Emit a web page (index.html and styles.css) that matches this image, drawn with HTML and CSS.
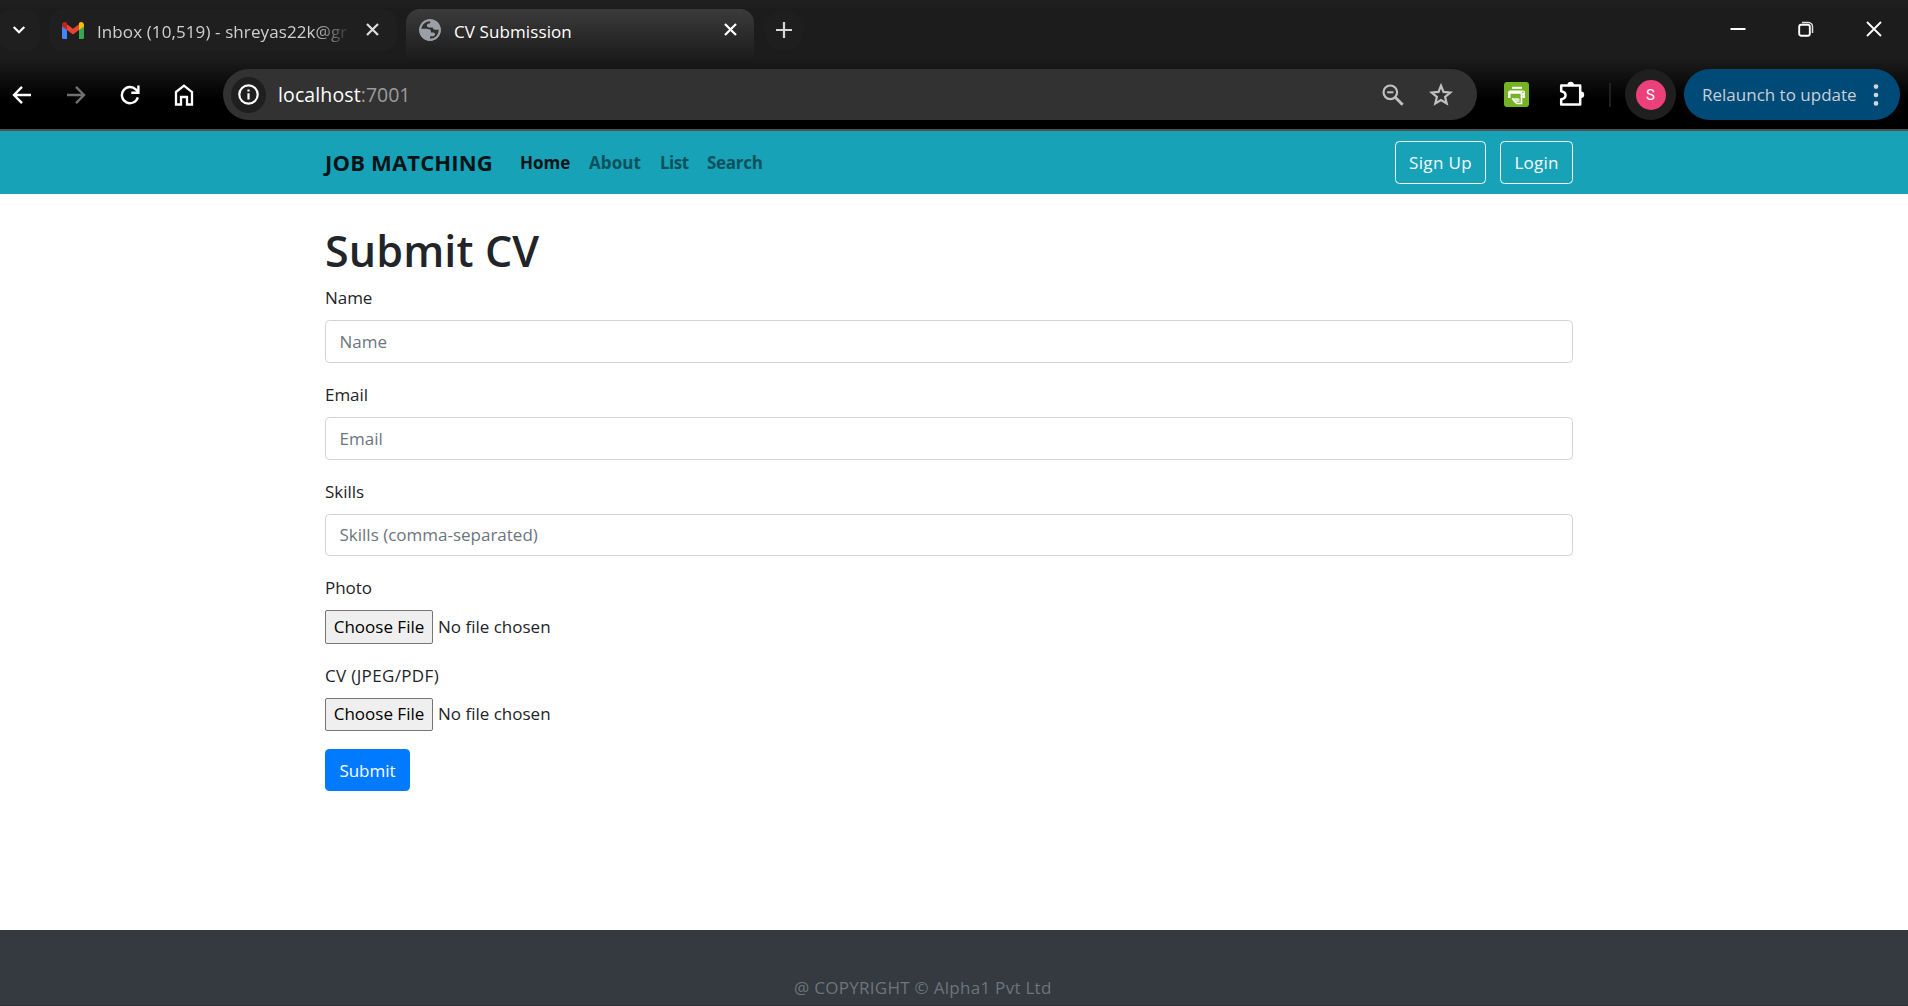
FILE: index.html
```html
<!DOCTYPE html>
<html lang="en">
<head>
<meta charset="utf-8">
<title>CV Submission</title>
<link rel="stylesheet" href="styles.css">
</head>
<body>
<header class="browser">
  <div class="tabstrip">
    <button class="tab-search" aria-label="Search tabs"><svg width="14" height="10" viewBox="0 0 14 10"><path d="M1.7 2l5.3 5.3L12.3 2" fill="none" stroke="#fff" stroke-width="2.2"/></svg></button>
    <div class="tab tab-mail">
      <svg class="favicon" width="22" height="17" viewBox="0 0 22 17"><path d="M0 3v12.5A1.5 1.5 0 0 0 1.500 17H5V6z" fill="#4285f4"/><path d="M22 3v12.500a1.500 1.500 0 0 1-1.500 1.500H17V6z" fill="#34a853"/><path d="M5 2.200l6 4.600 6-4.600v5.900l-6 4.500-6-4.500z" fill="#ea4335"/><path d="M0 3.200C0 .4 3-.8 5 .9v7.200L0 4.500z" fill="#c5221f"/><path d="M22 3.200C22 .4 19-.8 17 .9v7.200l5-3.600z" fill="#fbbc04"/></svg>
      <span class="tab-title">Inbox (10,519) - shreyas22k@gr</span>
      <svg class="tab-close" width="13" height="13" viewBox="0 0 13 13"><path d="M1 1l11 11M12 1L1 12" stroke="#dedede" stroke-width="2.2"/></svg>
    </div>
    <div class="tab tab-active">
      <svg class="favicon" width="22" height="22" viewBox="0 0 22 22"><circle cx="11" cy="11" r="10.800" fill="#9aa0a6"/><path d="M9.800 2.200C5.600 2.700 2.600 5.700 2.200 9.800c2 .1 4.700.1 6.500.1 2.200 0 3.300.9 3.300 2.700v1h2.300c1 0 1.700.8 1.700 1.700 0 1-.8 1.900-1.900 1.900h-3v2.500c3.400.3 6.600-1.700 8-4.800.6-1.400.8-2.700.8-4.100h-3.500c-1.600 0-2.600-1-2.600-2.300H9.900c-1.200 0-2-.7-2-1.700 0-1.500 1-2.200 2-2.200.8 0 1.300-.5 1.300-1.100V2.200z" fill="#303030"/><circle cx="11" cy="11" r="9.800" fill="none" stroke="#9aa0a6" stroke-width="1.800"/></svg>
      <span class="tab-title">CV Submission</span>
      <svg class="tab-close" width="13" height="13" viewBox="0 0 13 13"><path d="M1 1l11 11M12 1L1 12" stroke="#fff" stroke-width="2.200"/></svg>
    </div>
    <button class="new-tab" aria-label="New tab"><svg width="16" height="16" viewBox="0 0 16 16"><path d="M8 0v16M0 8h16" stroke="#d6d6d6" stroke-width="2.200"/></svg></button>
    <div class="window-controls">
      <svg width="16" height="16" viewBox="0 0 16 16"><path d="M.5 8h15" stroke="#fff" stroke-width="2"/></svg>
      <svg width="16" height="16" viewBox="0 0 16 16"><rect x="1.200" y="3.700" width="10.600" height="11" rx="2" fill="none" stroke="#fff" stroke-width="1.900"/><path d="M4 1.500h6.500a4.200 4.200 0 0 1 4 4.200V12" fill="none" stroke="#ddd" stroke-width="1.500"/></svg>
      <svg width="16" height="16" viewBox="0 0 16 16"><path d="M1 1l14 14M15 1L1 15" stroke="#fff" stroke-width="1.800"/></svg>
    </div>
  </div>
  <div class="toolbar">
    <button class="tool" aria-label="Back"><svg width="20" height="20" viewBox="0 0 20 20"><path d="M19 10H2.500M10 1.800L2 10l8 8.200" fill="none" stroke="#fff" stroke-width="2.400"/></svg></button>
    <button class="tool" aria-label="Forward"><svg width="20" height="20" viewBox="0 0 20 20"><path d="M1 10h16.500M10 1.800l8 8.200-8 8.200" fill="none" stroke="#707070" stroke-width="2.400"/></svg></button>
    <button class="tool" aria-label="Reload"><svg width="20" height="20" viewBox="0 0 20 20"><path d="M17.800 12.300A8.100 8.100 0 1 1 16 4.600l2 2.400" fill="none" stroke="#fff" stroke-width="2.400"/><path d="M18.400.500v7.200H11.300" fill="none" stroke="#fff" stroke-width="2.400"/></svg></button>
    <button class="tool" aria-label="Home"><svg width="20" height="22" viewBox="0 0 20 22"><path d="M2 8l8-6.300L18 8v12.500h-5V13H7v7.500H2z" fill="none" stroke="#fff" stroke-width="2.300"/></svg></button>
    <div class="omnibox">
      <span class="site-info"><svg width="21" height="21" viewBox="0 0 21 21"><circle cx="10.500" cy="10.500" r="9.200" fill="none" stroke="#fff" stroke-width="2.200"/><path d="M10.500 9.200v6.300M10.500 5.400v2.200" stroke="#fff" stroke-width="2.200"/></svg></span>
      <span class="url"><span class="host">localhost</span><span class="port">:7001</span></span>
      <svg class="zoom-icon" width="22" height="22" viewBox="0 0 22 22"><circle cx="8.300" cy="8.300" r="6.800" fill="none" stroke="#c0c0c0" stroke-width="2.200"/><path d="M13.200 13.200l7.500 7.500" stroke="#c0c0c0" stroke-width="2.800"/><path d="M5.200 8.300h6.200" stroke="#c0c0c0" stroke-width="2"/></svg>
      <svg width="24" height="23" viewBox="0 0 24 23"><path d="M12 2.700l2.500 6.200 6.800.6-5.200 4.400 1.600 6.600L12 17l-5.700 3.500 1.600-6.600-5.200-4.400 6.800-.6z" fill="none" stroke="#c0c0c0" stroke-width="2.200"/></svg>
    </div>
    <svg class="print-ext" width="25" height="25" viewBox="0 0 25 25"><rect width="25" height="25" rx="3" fill="#75b325"/><path d="M8 4.800h10v2H8z" fill="#fff"/><path d="M4 16V10.500a2 2 0 0 1 2-2h13a2 2 0 0 1 2 2V16h-2.500v-4.200h-12V16z" fill="#fff"/><path d="M8.200 16.200c1.600 2 2.700 4.300 5 5.300H17.500V11.500" fill="none" stroke="#fff" stroke-width="1.700"/><path d="M8.500 16.500l4-.5 3 .5V20h-3z" fill="#fff" opacity=".75"/><circle cx="19" cy="10.200" r=".8" fill="#75b325"/></svg>
    <svg class="puzzle" width="26" height="26" viewBox="0 0 26 26"><path d="M2.200 4.500h19v19h-19v-5.300c5.800-1 5.800-7 0-8z" fill="none" stroke="#fff" stroke-width="2.500" stroke-linejoin="round"/><path d="M8.500 4a3.200 3.200 0 0 1 6.400 0zM22 10.500a3.200 3.200 0 0 1 0 6.400z" fill="#fff"/></svg>
    <span class="separator"></span>
    <span class="profile"><span class="avatar">S</span></span>
    <button class="relaunch"><span>Relaunch to update</span><svg width="6" height="22" viewBox="0 0 6 22"><g fill="#d0d8de"><circle cx="3" cy="2.600" r="2.300"/><circle cx="3" cy="11" r="2.300"/><circle cx="3" cy="19.400" r="2.300"/></g></svg></button>
  </div>
</header>

<nav class="navbar">
  <div class="container nav-inner">
    <a class="brand">JOB MATCHING</a>
    <ul class="nav-links">
      <li class="home active">Home</li>
      <li class="about">About</li>
      <li class="list">List</li>
      <li class="search">Search</li>
    </ul>
    <a class="btn-outline signup">Sign Up</a>
    <a class="btn-outline login">Login</a>
  </div>
</nav>

<main class="container main">
  <h1>Submit CV</h1>
  <form>
    <div class="form-group"><label>Name</label><input class="form-control" type="text" placeholder="Name"></div>
    <div class="form-group"><label>Email</label><input class="form-control" type="text" placeholder="Email"></div>
    <div class="form-group"><label>Skills</label><input class="form-control" type="text" placeholder="Skills (comma-separated)"></div>
    <div class="form-group"><label>Photo</label><div class="file"><button type="button" class="choose">Choose File</button><span>No file chosen</span></div></div>
    <div class="form-group"><label class="cv-label">CV (JPEG/PDF)</label><div class="file"><button type="button" class="choose">Choose File</button><span>No file chosen</span></div></div>
    <button type="button" class="submit">Submit</button>
  </form>
</main>

<footer class="footer"><p>@ COPYRIGHT © Alpha1 Pvt Ltd</p></footer>
</body>
</html>
```
FILE: styles.css
```css
* { box-sizing: border-box; }
body {
  margin: 0;
  height: 1006px;
  overflow: hidden;
  display: flex;
  flex-direction: column;
  background: #fff;
  color: #212529;
  font: 17px/27px "Open Sans", "Noto Sans", sans-serif;
}
button { font: inherit; border: 0; margin: 0; padding: 0; background: none; }
svg { display: block; flex: none; }

/* Browser window */
.browser {
  flex: none;
  height: 131px;
  border-bottom: 2px solid #505050;
  background: linear-gradient(#202020, #1c1c1c 9px, #1c1c1c 58px, #000 100px);
}
.tabstrip { display: flex; height: 60px; padding-top: 9px; }
.tab-search {
  display: flex; align-items: center; justify-content: center;
  width: 42px; height: 42px; margin-left: -2px;
  border-radius: 14px; background: #1f1f1f;
}
.tab { display: flex; align-items: center; height: 42px; }
.tab-title { white-space: nowrap; padding-top: 3px; letter-spacing: .1px; }
.tab-mail {
  width: 348px; margin-left: 9px; padding-left: 13px;
  border-radius: 14px; background: #1f1f1f; color: #cfcfcf;
}
.tab-mail .tab-title {
  width: 252px; margin-left: 13px;
  mask-image: linear-gradient(90deg, #000 215px, transparent 255px);
}
.tab-mail .tab-close { margin-left: 17px; margin-top: -1px; }
.tab-active {
  width: 348px; height: 51px; margin-left: 9px; padding: 0 0 9px 13px;
  border-radius: 14px 14px 0 0;
  background: linear-gradient(#3b3b3b, #1b1b1b);
  color: #fff;
}
.tab-active .tab-title { margin-left: 13px; width: 257px; }
.tab-active .tab-close { margin-left: 13px; margin-top: -1px; }
.new-tab {
  display: flex; align-items: center; justify-content: center;
  width: 40px; height: 42px; margin-left: 10px;
  border-radius: 50%; background: #1e1e1e;
}
.window-controls {
  display: flex; align-items: center; gap: 52px;
  height: 40px; margin-left: auto; padding-right: 26px;
}
.toolbar { display: flex; align-items: center; height: 69px; }
.tool { display: flex; align-items: center; justify-content: center; width: 54px; height: 50px; flex: none; }
.tool:first-child { width: 49px; padding-right: 5px; }
.omnibox {
  display: flex; align-items: center;
  width: 1254px; height: 51px; margin-left: 12px; padding: 0 24px 0 8px;
  border-radius: 26px; background: #323232;
}
.site-info {
  display: flex; align-items: center; justify-content: center;
  width: 35px; height: 36px; border-radius: 50%; background: #1f1f1f;
}
.url { margin-left: 12px; font-size: 19.5px; }
.host { color: #fff; letter-spacing: .12px; }
.port { color: #9c9c9c; }
.zoom-icon { margin: 0 25px 0 auto; }
.print-ext { margin-left: 27px; }
.puzzle { margin: -2px 0 0 30px; }
.separator { width: 2px; height: 24px; margin-left: 24px; background: #1f1f1f; }
.profile {
  display: flex; align-items: center; justify-content: center;
  width: 51px; height: 51px; margin-left: 14px;
  border-radius: 50%; background: #1f1f1f;
}
.avatar {
  width: 30px; height: 30px; border-radius: 50%;
  background: #ec407a; color: #fff;
  font: 15px/30px Roboto, sans-serif; text-align: center;
}
.relaunch {
  display: flex; align-items: center;
  width: 216px; height: 51px; margin-left: 8px; padding-left: 18px;
  border-radius: 26px; background: #004a77; color: #c6d0d8;
  white-space: nowrap;
}
.relaunch svg { margin-left: 16px; }

/* Page */
.container { width: 1248px; margin-left: 325px; }
.navbar { flex: none; height: 63px; background: #17a2b8; }
.nav-inner { display: flex; align-items: center; height: 100%; }
.brand { width: 195px; font-size: 22px; font-weight: 700; letter-spacing: .17px; color: #001416; white-space: nowrap; }
.nav-links { display: flex; gap: 18px; margin: 0 auto 0 0; padding: 0; list-style: none; font-weight: 700; color: #0b515c; }
.nav-links .active { color: #001416; }
.home { width: 51px; }
.about { width: 53px; letter-spacing: .1px; }
.list { width: 29px; letter-spacing: -.5px; }
.search { letter-spacing: -.3px; }
.btn-outline {
  height: 43px; line-height: 41px; text-align: center;
  border: 1px solid #f8f9fa; border-radius: 4.5px; color: #f8f9fa;
}
.signup { width: 91px; letter-spacing: .35px; }
.login { width: 73px; margin-left: 14px; letter-spacing: .2px; }

.main { flex: 1; padding-top: 28px; }
h1 { margin: 0 0 4px; font-size: 43px; line-height: 58px; font-weight: 600; letter-spacing: .15px; }
.form-group { margin-bottom: 18px; }
label { display: block; margin-bottom: 9px; letter-spacing: -.05px; }
.cv-label { letter-spacing: .35px; }
.form-control {
  display: block; width: 100%; height: 42.75px; padding: 0 13.5px;
  border: 1px solid #ced4da; border-radius: 4.5px;
  background: #fff; color: #495057; font: inherit;
}
.form-control::placeholder { color: #6c757d; opacity: 1; }
.file { display: flex; align-items: center; height: 33.5px; gap: 5px; line-height: 26px; }
.file span { padding-bottom: 1px; }
.choose {
  width: 108px; height: 33.5px; padding-bottom: 1px; line-height: 30px; text-align: center;
  border: 1px solid #767676; border-radius: 2px; background: #efefef; color: #000;
}
.submit { display: block; width: 85px; height: 42px; border-radius: 4.5px; background: #007bff; color: #fff; }
.footer { flex: none; height: 76px; padding: 44px 0 0 794px; background: #343a40; border-bottom: 1px solid #2b2f34; }
.footer p { margin: 0; color: #6c757d; letter-spacing: .28px; }
```
